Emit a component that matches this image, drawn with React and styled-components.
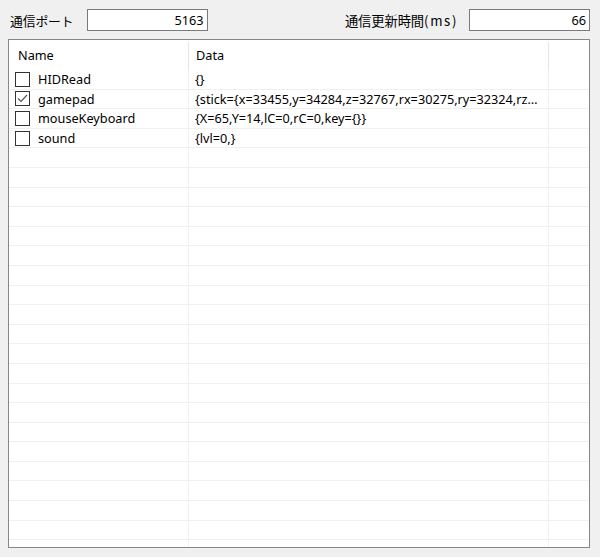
import React from 'react';
import styled, { createGlobalStyle } from 'styled-components';

const GlobalStyle = createGlobalStyle`
  html, body {
    margin: 0;
    padding: 0;
    background: #f0f0f0;
  }
  body {
    font-family: "Noto Sans", "Noto Sans CJK JP", sans-serif;
    font-size: 12.7px;
    color: #000;
  }
`;

const Window = styled.div`
  width: 600px;
  height: 557px;
  box-sizing: border-box;
  padding: 9px 10px 0 8px;
  background: #f0f0f0;
  overflow: hidden;
`;

const TopBar = styled.div`
  display: flex;
  justify-content: space-between;
  align-items: center;
  height: 22px;
  padding-left: 2px;
`;

const Field = styled.div`
  display: flex;
  align-items: center;
  gap: ${p => p.$gap}px;
`;

const Label = styled.span`
  font-family: "Noto Sans CJK JP", sans-serif;
  font-size: ${p => p.$size || 12.8}px;
  letter-spacing: -0.1px;
`;

const Unit = styled.span`
  letter-spacing: 1.6px;
`;

const NumberBox = styled.input`
  width: 121px;
  height: 22px;
  box-sizing: border-box;
  border: 1px solid #7a7a7a;
  background: #fff;
  text-align: right;
  padding: 0 3px;
  font-family: "Noto Sans", sans-serif;
  font-size: 12.7px;
  color: #000;
  outline: none;
`;

const ListView = styled.div`
  margin-top: 8px;
  height: 509px;
  box-sizing: border-box;
  border: 1px solid #828790;
  background: #fff;
  overflow: hidden;
`;

const Grid = styled.div`
  display: grid;
  grid-template-columns: 180px 360px 1fr;
`;

const HeaderCell = styled.div`
  height: 30px;
  display: flex;
  align-items: center;
  padding-left: ${p => p.$pad}px;
  box-sizing: border-box;
  position: relative;
  &::after {
    content: "";
    display: ${p => (p.$sep ? 'block' : 'none')};
    position: absolute;
    right: 0;
    top: 2px;
    bottom: 0;
    width: 1px;
    background: #e5e5e5;
  }
`;

const Cell = styled.div`
  height: 19.6px;
  box-sizing: border-box;
  border-bottom: 1px solid #f0f0f0;
  border-right: ${p => (p.$last ? 'none' : '1px solid #f0f0f0')};
  display: flex;
  align-items: center;
  padding-left: ${p => p.$pad}px;
  white-space: nowrap;
  overflow: hidden;
`;

const CheckBox = styled.span`
  width: 13px;
  height: 13px;
  border: 1px solid #333;
  background: #fff;
  margin-right: 8px;
  flex-shrink: 0;
  display: flex;
  align-items: center;
  justify-content: center;
`;

const rows = [
  { name: 'HIDRead', checked: false, data: '{}' },
  { name: 'gamepad', checked: true, data: '{stick={x=33455,y=34284,z=32767,rx=30275,ry=32324,rz…' },
  { name: 'mouseKeyboard', checked: false, data: '{X=65,Y=14,lC=0,rC=0,key={}}' },
  { name: 'sound', checked: false, data: '{lvl=0,}' },
];

const TOTAL_ROWS = 25;

export default function App() {
  const all = [...rows];
  while (all.length < TOTAL_ROWS) all.push(null);

  return (
    <>
      <GlobalStyle />
      <Window>
        <TopBar>
          <Field $gap={13}>
            <Label>通信ポート</Label>
            <NumberBox readOnly value="5163" />
          </Field>
          <Field $gap={11}>
            <Label $size={13.3}>通信更新時間<Unit>(ms)</Unit></Label>
            <NumberBox readOnly value="66" />
          </Field>
        </TopBar>
        <ListView>
          <Grid>
            <HeaderCell $pad={9} $sep>Name</HeaderCell>
            <HeaderCell $pad={7} $sep>Data</HeaderCell>
            <HeaderCell />
            {all.map((row, i) => (
              <React.Fragment key={i}>
                <Cell $pad={6}>
                  {row && (
                    <>
                      <CheckBox>
                        {row.checked && (
                          <svg width="11" height="9" viewBox="0 0 11 9">
                            <polyline points="1,4.5 4,7.5 10,1" fill="none" stroke="#555" strokeWidth="1.2" />
                          </svg>
                        )}
                      </CheckBox>
                      {row.name}
                    </>
                  )}
                </Cell>
                <Cell $pad={6}>{row ? row.data : ''}</Cell>
                <Cell $last />
              </React.Fragment>
            ))}
          </Grid>
        </ListView>
      </Window>
    </>
  );
}
